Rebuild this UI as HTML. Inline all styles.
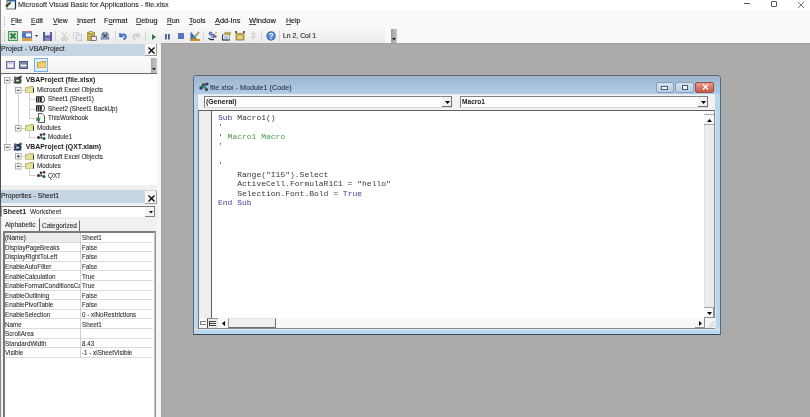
<!DOCTYPE html>
<html><head><meta charset="utf-8">
<style>
*{margin:0;padding:0;box-sizing:border-box}
html{width:810px;height:417px;overflow:hidden;background:#f9f9f9}
body{will-change:transform;width:810px;height:417px;overflow:hidden;background:#f9f9f9;font-family:"Liberation Sans",sans-serif;color:#000;position:relative}
.a{position:absolute}
.t{position:absolute;white-space:nowrap;line-height:1;transform-origin:0 0}
.t u{text-decoration:underline;text-underline-offset:0.6px;text-decoration-thickness:0.7px;text-decoration-color:#555}
svg{position:absolute;overflow:visible}
.code{font-family:"Liberation Mono",monospace;font-size:8px;position:absolute;white-space:pre;line-height:9.45px;color:#383838}
.kw{color:#40409a}
.cm{color:#509a50}
.ap{color:#3a5a3a}
</style></head><body>
<div class="a" style="left:0px;top:0px;width:810px;height:10px;background:#fff"></div>
<div class="a" style="left:0px;top:0px;width:1px;height:417px;background:#8a8a8a"></div>
<svg style="left:5px;top:0px" width="11" height="10" viewBox="0 0 11 10"><rect x="2" y="0.5" width="8.5" height="8.5" fill="#f0f4f8" stroke="#6a7080" stroke-width="1"/><path d="M2 0.5H10.5V9" stroke="#1a3050" stroke-width="1.2" fill="none"/><rect x="2" y="0" width="8.5" height="1.5" fill="#3a6a9a"/><path d="M1 6.5L5.5 2.5" stroke="#2a3a18" stroke-width="2.2"/><path d="M3.5 5L6.5 2.2" stroke="#6a8a40" stroke-width="0.8"/></svg>
<div class="t" style="left:17.71px;top:0.85px;font-size:7.5px;color:#2a2a2a;transform:scaleX(0.957);-webkit-text-stroke:0.1px #2a2a2a">Microsoft Visual Basic for Applications - file.xlsx</div>
<div class="a" style="left:744px;top:3px;width:6px;height:1px;background:#555"></div>
<div class="a" style="left:771px;top:0.5px;width:6px;height:6px;border:1px solid #555;border-top-width:1.5px;border-radius:1px"></div>
<svg style="left:798px;top:1.5px" width="6" height="6" viewBox="0 0 6 6"><path d="M0 0L6 6M6 0L0 6" stroke="#555" stroke-width="0.8"/></svg>
<div class="a" style="left:4px;top:16px;width:1px;height:1px;background:#b8b8b8"></div>
<div class="a" style="left:4px;top:18px;width:1px;height:1px;background:#b8b8b8"></div>
<div class="a" style="left:4px;top:20px;width:1px;height:1px;background:#b8b8b8"></div>
<div class="a" style="left:4px;top:22px;width:1px;height:1px;background:#b8b8b8"></div>
<div class="a" style="left:4px;top:24px;width:1px;height:1px;background:#b8b8b8"></div>
<div class="a" style="left:4px;top:26px;width:1px;height:1px;background:#b8b8b8"></div>
<div class="t" style="left:11.33px;top:17.38px;font-size:7.7px;color:#141414;transform:scaleX(0.890);-webkit-text-stroke:0.12px #141414"><u>F</u>ile</div>
<div class="t" style="left:31.42px;top:17.38px;font-size:7.7px;color:#141414;transform:scaleX(0.901);-webkit-text-stroke:0.12px #141414"><u>E</u>dit</div>
<div class="t" style="left:52.73px;top:17.38px;font-size:7.7px;color:#141414;transform:scaleX(0.891);-webkit-text-stroke:0.12px #141414"><u>V</u>iew</div>
<div class="t" style="left:76.70px;top:17.38px;font-size:7.7px;color:#141414;transform:scaleX(0.966);-webkit-text-stroke:0.12px #141414"><u>I</u>nsert</div>
<div class="t" style="left:103.70px;top:17.38px;font-size:7.7px;color:#141414;transform:scaleX(0.968);-webkit-text-stroke:0.12px #141414">F<u>o</u>rmat</div>
<div class="t" style="left:135.71px;top:17.38px;font-size:7.7px;color:#141414;transform:scaleX(0.951);-webkit-text-stroke:0.12px #141414"><u>D</u>ebug</div>
<div class="t" style="left:166.73px;top:17.38px;font-size:7.7px;color:#141414;transform:scaleX(0.888);-webkit-text-stroke:0.12px #141414"><u>R</u>un</div>
<div class="t" style="left:188.72px;top:17.38px;font-size:7.7px;color:#141414;transform:scaleX(0.922);-webkit-text-stroke:0.12px #141414"><u>T</u>ools</div>
<div class="t" style="left:214.71px;top:17.38px;font-size:7.7px;color:#141414;transform:scaleX(0.957);-webkit-text-stroke:0.12px #141414"><u>A</u>dd-Ins</div>
<div class="t" style="left:249.40px;top:17.38px;font-size:7.7px;color:#141414;transform:scaleX(0.982);-webkit-text-stroke:0.12px #141414"><u>W</u>indow</div>
<div class="t" style="left:285.72px;top:17.38px;font-size:7.7px;color:#141414;transform:scaleX(0.920);-webkit-text-stroke:0.12px #141414"><u>H</u>elp</div>
<div class="a" style="left:1px;top:28px;width:384px;height:16px;background:linear-gradient(#f7f7f7,#ebebeb)"></div>
<div class="a" style="left:385px;top:28px;width:6px;height:16px;background:#f9f9f9"></div>
<div class="a" style="left:391px;top:29px;width:6px;height:14px;background:linear-gradient(90deg,#9c9c9c,#c4c4c4)"></div>
<svg style="left:392px;top:38px" width="4" height="3" viewBox="0 0 4 3"><path d="M0 0H4L2 2.5Z" fill="#222"/></svg>
<div class="a" style="left:4px;top:30px;width:1px;height:1px;background:#b8b8b8"></div>
<div class="a" style="left:4px;top:32px;width:1px;height:1px;background:#b8b8b8"></div>
<div class="a" style="left:4px;top:34px;width:1px;height:1px;background:#b8b8b8"></div>
<div class="a" style="left:4px;top:36px;width:1px;height:1px;background:#b8b8b8"></div>
<div class="a" style="left:4px;top:38px;width:1px;height:1px;background:#b8b8b8"></div>
<div class="a" style="left:4px;top:40px;width:1px;height:1px;background:#b8b8b8"></div>
<svg style="left:8px;top:31px" width="10" height="10" viewBox="0 0 10 10"><rect x="0.5" y="0.5" width="9" height="9" fill="#c8e4c8" stroke="#4a9a5a"/><path d="M2.5 2.5L7.5 7.5M7.5 2.5L2.5 7.5" stroke="#2a7a3a" stroke-width="1.8"/></svg>
<svg style="left:22px;top:31px" width="10" height="10" viewBox="0 0 10 10"><rect x="0" y="0" width="10" height="10" fill="#4a7ac8"/><rect x="0" y="0" width="10" height="1.5" fill="#b07aa0"/><rect x="0" y="7" width="10" height="3" fill="#d8a040"/><rect x="4" y="2.5" width="5" height="3" fill="#fff"/></svg>
<svg style="left:35px;top:35px" width="3" height="2" viewBox="0 0 3 2"><path d="M0 0H3L1.5 2Z" fill="#333"/></svg>
<svg style="left:43px;top:31.5px" width="9" height="9" viewBox="0 0 9 9"><rect x="0" y="0" width="9" height="9" fill="#5a5aa0"/><rect x="2" y="0" width="5" height="3.5" fill="#e8e8f4"/><rect x="2" y="5.5" width="5" height="3.5" fill="#8a8ac0"/></svg>
<div class="a" style="left:55px;top:31px;width:1px;height:10px;background:#d4d4d4"></div>
<svg style="left:61px;top:31.5px" width="7" height="9" viewBox="0 0 7 9"><path d="M1 0L5 6M6 0L2 6" stroke="#c8c8c8" stroke-width="1"/><circle cx="1.8" cy="7" r="1.5" fill="none" stroke="#c8c8c8"/><circle cx="5.2" cy="7" r="1.5" fill="none" stroke="#c8c8c8"/></svg>
<svg style="left:73px;top:31.5px" width="9" height="9" viewBox="0 0 9 9"><rect x="0.5" y="0.5" width="5" height="6" fill="#f4f4f4" stroke="#d4d4d4"/><rect x="3.5" y="2.5" width="5" height="6" fill="#e8e8f0" stroke="#ccccd4"/></svg>
<svg style="left:87px;top:31px" width="10" height="10" viewBox="0 0 10 10"><rect x="0.5" y="1.5" width="7" height="8" fill="#c8b048" stroke="#a08a30" stroke-width="0.8"/><rect x="2.5" y="0.5" width="3" height="2" fill="#fff4c0" stroke="#807020" stroke-width="0.6"/><rect x="4.3" y="5.3" width="5" height="4.2" fill="#f4f0f4" stroke="#505050" stroke-width="0.7"/></svg>
<svg style="left:100px;top:31px" width="10" height="10" viewBox="0 0 10 10"><path d="M1.5 3L3.5 0.8H4.5L4.8 8.5H0.5Z M8.5 3L6.5 0.8H5.5L5.2 8.5H9.5Z" fill="#6a7a9a"/><path d="M2.2 4V7.5M7.8 4V7.5" stroke="#c8d4e8" stroke-width="0.9"/><rect x="4" y="3.5" width="2" height="2.5" fill="#3a4a6a"/></svg>
<div class="a" style="left:115px;top:31px;width:1px;height:10px;background:#d4d4d4"></div>
<svg style="left:119px;top:32px" width="8" height="8" viewBox="0 0 8 8"><path d="M1 1V4.5H4.5" stroke="#3a6ac0" stroke-width="1.6" fill="none"/><path d="M1.5 4Q4 1 6.5 3.5Q7.5 6 4.5 7.5" stroke="#3a6ac0" stroke-width="1.8" fill="none"/></svg>
<svg style="left:132px;top:32px" width="8" height="8" viewBox="0 0 8 8"><path d="M7 1V4.5H3.5" stroke="#cccccc" stroke-width="1.5" fill="none"/><path d="M6.5 4Q4 1 1.5 3.5Q0.5 6 3.5 7.5" stroke="#cccccc" stroke-width="1.6" fill="none"/></svg>
<div class="a" style="left:145px;top:31px;width:1px;height:10px;background:#d4d4d4"></div>
<svg style="left:152px;top:33.5px" width="4" height="6" viewBox="0 0 4 6"><path d="M0 0L4 3L0 6Z" fill="#2a7a3a"/></svg>
<svg style="left:165px;top:33.5px" width="5" height="5.5" viewBox="0 0 5 5.5"><rect x="0" y="0" width="1.8" height="5.5" fill="#4a5a98"/><rect x="3" y="0" width="1.8" height="5.5" fill="#4a5a98"/></svg>
<svg style="left:178px;top:33px" width="6" height="6" viewBox="0 0 6 6"><rect x="0" y="0" width="6" height="6" fill="#5a72c0" rx="0.5"/></svg>
<svg style="left:190px;top:31px" width="10" height="10" viewBox="0 0 10 10"><path d="M0.5 0.5V8L7 8Z" fill="#3a6ac0"/><path d="M3 8L9 1" stroke="#8a9a50" stroke-width="1.6"/><rect x="0" y="8" width="10" height="2" fill="#d88a20"/></svg>
<div class="a" style="left:203px;top:31px;width:1px;height:10px;background:#d4d4d4"></div>
<svg style="left:207.5px;top:31px" width="10" height="10" viewBox="0 0 10 10"><circle cx="2.5" cy="2.5" r="2" fill="#6a82b8"/><circle cx="5" cy="5" r="2.3" fill="#5a7ab8"/><circle cx="3.5" cy="5.5" r="1.3" fill="#a8c0e0"/><path d="M0.5 7Q2 9.3 6 8.3" stroke="#1a2a4a" stroke-width="1.3" fill="none"/><circle cx="8" cy="1.8" r="1.3" fill="#e0c898"/><circle cx="7.7" cy="5.5" r="0.9" fill="#7a3a3a"/></svg>
<svg style="left:221.5px;top:31px" width="10" height="10" viewBox="0 0 10 10"><rect x="0.5" y="3.5" width="7" height="5.5" fill="#dde4ee" stroke="#8a96a8" stroke-width="0.8"/><path d="M0.2 9H7.6M0.5 4V9" stroke="#2a3450" stroke-width="1"/><path d="M2 1.5Q5 0.3 9 1.2V3.8Q6 4.5 2 3.8Z" fill="#b8ac58"/><rect x="2.5" y="5.5" width="3" height="2" fill="#9aaccc"/></svg>
<svg style="left:235px;top:31px" width="10" height="10" viewBox="0 0 10 10"><rect x="1" y="2.5" width="8" height="6.5" fill="#c8b858" stroke="#8a7a30" stroke-width="0.8"/><circle cx="1" cy="1" r="1" fill="#333"/><circle cx="9" cy="1" r="1" fill="#333"/><rect x="3" y="5" width="4" height="2.5" fill="#e8dca0"/></svg>
<svg style="left:250px;top:32px" width="7" height="7" viewBox="0 0 7 7"><path d="M1 1L6 6M6 1L1 6M3.5 0V7" stroke="#d4d4d4" stroke-width="1.2"/></svg>
<div class="a" style="left:261px;top:31px;width:1px;height:10px;background:#d4d4d4"></div>
<svg style="left:265.5px;top:31px" width="10" height="10" viewBox="0 0 10 10"><circle cx="5" cy="5" r="4.7" fill="#3a6ab8"/><circle cx="5" cy="5" r="3.5" fill="#5a8ad0"/><path d="M3.5 3.8Q3.6 2.3 5 2.3Q6.5 2.3 6.5 3.8Q6.5 4.8 5 5.5V6.3" stroke="#fff" stroke-width="1.1" fill="none"/><circle cx="5" cy="7.8" r="0.7" fill="#fff"/></svg>
<div class="a" style="left:279px;top:31px;width:1px;height:10px;background:#d4d4d4"></div>
<div class="t" style="left:283.43px;top:32.15px;font-size:7.5px;color:#1e1e1e;transform:scaleX(0.914);-webkit-text-stroke:0.1px #1e1e1e">Ln 2, Col 1</div>
<div class="a" style="left:161px;top:44px;width:649px;height:373px;background:#ababab"></div>
<div class="a" style="left:161px;top:43px;width:649px;height:1px;background:#a2a2a2"></div>
<div class="a" style="left:157px;top:44px;width:4px;height:373px;background:#f6f6f6"></div>
<div class="a" style="left:161px;top:44px;width:1px;height:373px;background:#a4a4a4"></div>
<div class="a" style="left:1px;top:44px;width:156px;height:146px;background:#fff"></div>
<div class="a" style="left:1px;top:44px;width:156px;height:12px;background:#c6d5e4"></div>
<div class="t" style="left:1.22px;top:44.80px;font-size:7.8px;color:#202020;transform:scaleX(0.898);-webkit-text-stroke:0.1px #202020">Project - VBAProject</div>
<div class="a" style="left:145px;top:44px;width:12px;height:12px;background:#f8f8f8;border-right:1px solid #9a9a9a;border-bottom:1px solid #9a9a9a"></div>
<svg style="left:147.5px;top:46.5px" width="7" height="7" viewBox="0 0 7 7"><path d="M0.5 0.5L6.5 6.5M6.5 0.5L0.5 6.5" stroke="#000" stroke-width="1.3"/></svg>
<div class="a" style="left:1px;top:56px;width:156px;height:17px;background:linear-gradient(#fbfbfb,#f3f3f3)"></div>
<div class="a" style="left:151px;top:58px;width:6px;height:15px;background:linear-gradient(90deg,#a8a8a8,#c8c8c8)"></div>
<svg style="left:152px;top:68px" width="4" height="3" viewBox="0 0 4 3"><path d="M0 0H4L2 2.5Z" fill="#333"/></svg>
<div class="a" style="left:1px;top:73px;width:156px;height:1px;background:#6a6a6a"></div>
<svg style="left:6px;top:61px" width="9" height="8" viewBox="0 0 9 8"><rect x="0.5" y="0.5" width="8" height="7" fill="#c8c8e0" stroke="#6a6a98"/><rect x="2" y="3" width="5" height="3" fill="#f0f0f8"/></svg>
<svg style="left:19px;top:61px" width="9" height="8" viewBox="0 0 9 8"><rect x="0.5" y="0.5" width="8" height="7" fill="#7a8aa8" stroke="#505a78"/><rect x="1.5" y="3.5" width="6" height="2" fill="#e8ecf4"/></svg>
<div class="a" style="left:34px;top:58px;width:14px;height:14px;background:#e0ecf8;border:1px solid #7ab0e0"></div>
<svg style="left:36.5px;top:61px" width="9" height="7" viewBox="0 0 9 7"><path d="M0.5 1.5H3.5L4.5 0.5H8.5V6.5H0.5Z" fill="#e8c860" stroke="#b09030" stroke-width="0.8"/><rect x="1" y="2.5" width="7.5" height="4" fill="#f0d070"/></svg>
<div class="a" style="left:6px;top:83.0px;width:1px;height:60.6px;background:#d2d2d2"></div>
<div class="a" style="left:18px;top:92.5px;width:1px;height:32.1px;background:#d2d2d2"></div>
<div class="a" style="left:18px;top:159.2px;width:1px;height:3.5px;background:#d2d2d2"></div>
<div class="a" style="left:29px;top:93.0px;width:1px;height:25.1px;background:#d2d2d2"></div>
<div class="a" style="left:29px;top:131.1px;width:1px;height:6.0px;background:#d2d2d2"></div>
<div class="a" style="left:29px;top:169.2px;width:1px;height:6.0px;background:#d2d2d2"></div>
<div class="a" style="left:10px;top:80.0px;width:4px;height:1px;background:#d2d2d2"></div>
<div class="a" style="left:10px;top:146.6px;width:4px;height:1px;background:#d2d2d2"></div>
<div class="a" style="left:21px;top:89.5px;width:4px;height:1px;background:#d2d2d2"></div>
<div class="a" style="left:21px;top:127.6px;width:4px;height:1px;background:#d2d2d2"></div>
<div class="a" style="left:21px;top:156.2px;width:4px;height:1px;background:#d2d2d2"></div>
<div class="a" style="left:21px;top:165.7px;width:4px;height:1px;background:#d2d2d2"></div>
<div class="a" style="left:29px;top:99.0px;width:7px;height:1px;background:#d2d2d2"></div>
<div class="a" style="left:29px;top:108.6px;width:7px;height:1px;background:#d2d2d2"></div>
<div class="a" style="left:29px;top:118.1px;width:7px;height:1px;background:#d2d2d2"></div>
<div class="a" style="left:29px;top:137.1px;width:7px;height:1px;background:#d2d2d2"></div>
<div class="a" style="left:29px;top:175.2px;width:7px;height:1px;background:#d2d2d2"></div>
<svg style="left:3.5px;top:77.2px" width="7" height="7" viewBox="0 0 7 7"><rect x="0.5" y="0.5" width="5.5" height="5.5" fill="#fff" stroke="#ababab"/><path d="M1.8 3.25H4.7" stroke="#333" stroke-width="1"/></svg>
<svg style="left:13px;top:75.3px" width="10" height="9" viewBox="0 0 10 9"><path d="M1.5 1.2L4 2L6.5 1.5L8.3 0.2L8.8 2.2L7.8 3.8L8.8 5.2L8 7.2L8.8 8.3L5 8.8L1.5 8.5L0.2 7.6L1.6 6.2L1 4Z" fill="#3a4a3a"/><rect x="3" y="4.8" width="3.2" height="1.6" fill="#c8e4d8"/><rect x="2.2" y="2.6" width="1.5" height="1.3" fill="#7a9a8a"/></svg>
<div class="t" style="left:25.72px;top:77.16px;font-size:6.9px;color:#1a1a1a;font-weight:bold;">VBAProject (file.xlsx)</div>
<svg style="left:15px;top:86.7px" width="7" height="7" viewBox="0 0 7 7"><rect x="0.5" y="0.5" width="5.5" height="5.5" fill="#fff" stroke="#ababab"/><path d="M1.8 3.25H4.7" stroke="#333" stroke-width="1"/></svg>
<svg style="left:25px;top:86.0px" width="9" height="7" viewBox="0 0 9 7"><path d="M0.5 1.5H3.5L4.5 0.5H8.5V6.5H0.5Z" fill="#d8d890" stroke="#a8a860" stroke-width="0.8"/><rect x="1" y="2.5" width="7.5" height="4" fill="#e4e49a"/><path d="M8.5 2V6.5" stroke="#333" stroke-width="1"/></svg>
<div class="t" style="left:36.55px;top:85.89px;font-size:7.0px;color:#262626;transform:scaleX(0.900);-webkit-text-stroke:0.08px #262626">Microsoft Excel Objects</div>
<svg style="left:36px;top:95.5px" width="9" height="7" viewBox="0 0 9 7"><rect x="0" y="0.3" width="5.8" height="6.2" fill="#1e1e1e"/><path d="M1.6 1.2V6.5M3.6 1.2V6.5" stroke="#d8d8d8" stroke-width="0.7"/><path d="M5.8 0.3H7Q8.6 0.8 8.4 3.4Q8.6 6 7 6.5H5.8" stroke="#333" fill="none" stroke-width="1"/></svg>
<div class="t" style="left:47.75px;top:95.41px;font-size:7.0px;color:#262626;transform:scaleX(0.900);-webkit-text-stroke:0.08px #262626">Sheet1 (Sheet1)</div>
<svg style="left:36px;top:105.1px" width="9" height="7" viewBox="0 0 9 7"><rect x="0" y="0.3" width="5.8" height="6.2" fill="#1e1e1e"/><path d="M1.6 1.2V6.5M3.6 1.2V6.5" stroke="#d8d8d8" stroke-width="0.7"/><path d="M5.8 0.3H7Q8.6 0.8 8.4 3.4Q8.6 6 7 6.5H5.8" stroke="#333" fill="none" stroke-width="1"/></svg>
<div class="t" style="left:47.75px;top:104.93px;font-size:7.0px;color:#262626;transform:scaleX(0.900);-webkit-text-stroke:0.08px #262626">Sheet2 (Sheet1 BackUp)</div>
<svg style="left:36px;top:113.3px" width="9" height="10" viewBox="0 0 9 10"><path d="M2.5 0.5H6L8.5 3V9.5H2.5Z" fill="#fff" stroke="#444" stroke-width="0.9"/><circle cx="2.2" cy="6.3" r="2" fill="#4a9a58"/><path d="M0.5 4.5L4 8M4 4.5L0.5 8" stroke="#2a7a3a" stroke-width="0.9"/></svg>
<div class="t" style="left:47.75px;top:114.45px;font-size:7.0px;color:#262626;transform:scaleX(0.900);-webkit-text-stroke:0.08px #262626">ThisWorkbook</div>
<svg style="left:15px;top:124.8px" width="7" height="7" viewBox="0 0 7 7"><rect x="0.5" y="0.5" width="5.5" height="5.5" fill="#fff" stroke="#ababab"/><path d="M1.8 3.25H4.7" stroke="#333" stroke-width="1"/></svg>
<svg style="left:25px;top:124.1px" width="9" height="7" viewBox="0 0 9 7"><path d="M0.5 1.5H3.5L4.5 0.5H8.5V6.5H0.5Z" fill="#d8d890" stroke="#a8a860" stroke-width="0.8"/><rect x="1" y="2.5" width="7.5" height="4" fill="#e4e49a"/><path d="M8.5 2V6.5" stroke="#333" stroke-width="1"/></svg>
<div class="t" style="left:36.55px;top:123.97px;font-size:7.0px;color:#262626;transform:scaleX(0.900);-webkit-text-stroke:0.08px #262626">Modules</div>
<svg style="left:36px;top:132.1px" width="10" height="9" viewBox="0 0 10 9"><circle cx="2.5" cy="5.5" r="1.5" fill="#4a1a4a"/><circle cx="5" cy="2.8" r="1.3" fill="#2a3a2a"/><circle cx="8" cy="2.3" r="1.4" fill="#6a2a5a"/><circle cx="8" cy="6.5" r="1.5" fill="#1a5a4a"/><circle cx="5.3" cy="5.5" r="1.2" fill="#3a6a4a"/></svg>
<div class="t" style="left:47.75px;top:133.49px;font-size:7.0px;color:#262626;transform:scaleX(0.900);-webkit-text-stroke:0.08px #262626">Module1</div>
<svg style="left:3.5px;top:143.8px" width="7" height="7" viewBox="0 0 7 7"><rect x="0.5" y="0.5" width="5.5" height="5.5" fill="#fff" stroke="#ababab"/><path d="M1.8 3.25H4.7" stroke="#333" stroke-width="1"/></svg>
<svg style="left:13px;top:141.9px" width="10" height="9" viewBox="0 0 10 9"><path d="M1.5 1.2L4 2L6.5 1.5L8.3 0.2L8.8 2.2L7.8 3.8L8.8 5.2L8 7.2L8.8 8.3L5 8.8L1.5 8.5L0.2 7.6L1.6 6.2L1 4Z" fill="#2a3a5a"/><rect x="3" y="4.8" width="3.2" height="1.6" fill="#c8e4d8"/><rect x="2.2" y="2.6" width="1.5" height="1.3" fill="#7a9a8a"/></svg>
<div class="t" style="left:25.72px;top:143.80px;font-size:6.9px;color:#1a1a1a;font-weight:bold;">VBAProject (QXT.xlam)</div>
<svg style="left:15px;top:153.4px" width="7" height="7" viewBox="0 0 7 7"><rect x="0.5" y="0.5" width="5.5" height="5.5" fill="#fff" stroke="#ababab"/><path d="M1.8 3.25H4.7 M3.25 1.8V4.7" stroke="#333" stroke-width="1"/></svg>
<svg style="left:25px;top:152.7px" width="9" height="7" viewBox="0 0 9 7"><path d="M0.5 1.5H3.5L4.5 0.5H8.5V6.5H0.5Z" fill="#d8d890" stroke="#a8a860" stroke-width="0.8"/><rect x="1" y="2.5" width="7.5" height="4" fill="#e4e49a"/><path d="M8.5 2V6.5" stroke="#333" stroke-width="1"/></svg>
<div class="t" style="left:36.55px;top:152.53px;font-size:7.0px;color:#262626;transform:scaleX(0.900);-webkit-text-stroke:0.08px #262626">Microsoft Excel Objects</div>
<svg style="left:15px;top:162.9px" width="7" height="7" viewBox="0 0 7 7"><rect x="0.5" y="0.5" width="5.5" height="5.5" fill="#fff" stroke="#ababab"/><path d="M1.8 3.25H4.7" stroke="#333" stroke-width="1"/></svg>
<svg style="left:25px;top:162.2px" width="9" height="7" viewBox="0 0 9 7"><path d="M0.5 1.5H3.5L4.5 0.5H8.5V6.5H0.5Z" fill="#d8d890" stroke="#a8a860" stroke-width="0.8"/><rect x="1" y="2.5" width="7.5" height="4" fill="#e4e49a"/><path d="M8.5 2V6.5" stroke="#333" stroke-width="1"/></svg>
<div class="t" style="left:36.55px;top:162.05px;font-size:7.0px;color:#262626;transform:scaleX(0.900);-webkit-text-stroke:0.08px #262626">Modules</div>
<svg style="left:36px;top:170.2px" width="10" height="9" viewBox="0 0 10 9"><circle cx="2.5" cy="5.5" r="1.5" fill="#4a1a4a"/><circle cx="5" cy="2.8" r="1.3" fill="#2a3a2a"/><circle cx="8" cy="2.3" r="1.4" fill="#6a2a5a"/><circle cx="8" cy="6.5" r="1.5" fill="#1a5a4a"/><circle cx="5.3" cy="5.5" r="1.2" fill="#3a6a4a"/></svg>
<div class="t" style="left:47.75px;top:171.57px;font-size:7.0px;color:#262626;transform:scaleX(0.900);-webkit-text-stroke:0.08px #262626">QXT</div>
<div class="a" style="left:1px;top:185px;width:156px;height:5px;background:#f0f0f0"></div>
<div class="a" style="left:1px;top:190px;width:156px;height:227px;background:#f0f0f0"></div>
<div class="a" style="left:0px;top:44px;width:1px;height:172px;background:#505050"></div>
<div class="a" style="left:1px;top:190px;width:156px;height:13px;background:#c6d5e4"></div>
<div class="t" style="left:1.33px;top:191.60px;font-size:7.8px;color:#202020;transform:scaleX(0.864);-webkit-text-stroke:0.1px #202020">Properties - Sheet1</div>
<div class="a" style="left:145px;top:190.5px;width:12px;height:13px;background:#f8f8f8;border-right:1px solid #9a9a9a;border-bottom:1px solid #9a9a9a"></div>
<svg style="left:147.5px;top:194.5px" width="7" height="6.5" viewBox="0 0 7 6.5"><path d="M0.5 0.5L6.5 6.5M6.5 0.5L0.5 6.5" stroke="#000" stroke-width="1.3"/></svg>
<div class="a" style="left:1px;top:206px;width:154px;height:11px;background:#fff;border-top:1px solid #7a7a7a;border-left:1px solid #9a9a9a"></div>
<div class="t" style="left:2.92px;top:207.81px;font-size:7.2px;color:#1a1a1a;font-weight:bold;transform:scaleX(0.981);">Sheet1</div>
<div class="t" style="left:29.74px;top:207.64px;font-size:7.4px;color:#303030;transform:scaleX(0.886);-webkit-text-stroke:0.08px #303030">Worksheet</div>
<div class="a" style="left:145px;top:207px;width:10px;height:10px;background:#f4f4f4;border-right:1px solid #808080;border-bottom:1px solid #808080"></div>
<svg style="left:148.5px;top:210.5px" width="4" height="3" viewBox="0 0 4 3"><path d="M0 0H4L2 2.5Z" fill="#000"/></svg>
<div class="a" style="left:3px;top:218px;width:37px;height:14px;background:#f4f4f4;border-top:1px solid #fff;border-left:1px solid #fff;border-right:1px solid #606060"></div>
<div class="t" style="left:5.04px;top:220.92px;font-size:7.3px;color:#262626;transform:scaleX(0.895);-webkit-text-stroke:0.08px #262626">Alphabetic</div>
<div class="a" style="left:40px;top:220px;width:40px;height:11px;background:#f0f0f0;border-top:1px solid #fff;border-right:1px solid #707070"></div>
<div class="t" style="left:41.94px;top:221.52px;font-size:7.3px;color:#262626;transform:scaleX(0.885);-webkit-text-stroke:0.08px #262626">Categorized</div>
<div class="a" style="left:3px;top:231px;width:152px;height:186px;background:#fff;border-top:2px solid #7a7a7a;border-left:2px solid #7a7a7a;border-right:1px solid #c0c0c0"></div>
<div class="a" style="left:155px;top:231px;width:1px;height:186px;background:#9a9a9a"></div>
<div class="a" style="left:5px;top:233px;width:75px;height:9px;background:#ececec"></div>
<div class="a" style="left:5px;top:241.6px;width:148px;height:1px;background:#dcdcdc"></div>
<div class="a" style="left:5px;top:233.0px;width:75px;height:9px;overflow:hidden">
<div class="t" style="left:0.25px;top:1.21px;font-size:7.2px;color:#2a2a2a;transform:scaleX(0.870);-webkit-text-stroke:0.08px #2a2a2a">(Name)</div>
</div>
<div class="t" style="left:81.75px;top:234.21px;font-size:7.2px;color:#2a2a2a;transform:scaleX(0.870);-webkit-text-stroke:0.08px #2a2a2a">Sheet1</div>
<div class="a" style="left:5px;top:251.2px;width:148px;height:1px;background:#dcdcdc"></div>
<div class="a" style="left:5px;top:242.6px;width:75px;height:9px;overflow:hidden">
<div class="t" style="left:0.25px;top:1.21px;font-size:7.2px;color:#2a2a2a;transform:scaleX(0.870);-webkit-text-stroke:0.08px #2a2a2a">DisplayPageBreaks</div>
</div>
<div class="t" style="left:81.75px;top:243.81px;font-size:7.2px;color:#2a2a2a;transform:scaleX(0.870);-webkit-text-stroke:0.08px #2a2a2a">False</div>
<div class="a" style="left:5px;top:260.8px;width:148px;height:1px;background:#dcdcdc"></div>
<div class="a" style="left:5px;top:252.2px;width:75px;height:9px;overflow:hidden">
<div class="t" style="left:0.25px;top:1.21px;font-size:7.2px;color:#2a2a2a;transform:scaleX(0.870);-webkit-text-stroke:0.08px #2a2a2a">DisplayRightToLeft</div>
</div>
<div class="t" style="left:81.75px;top:253.41px;font-size:7.2px;color:#2a2a2a;transform:scaleX(0.870);-webkit-text-stroke:0.08px #2a2a2a">False</div>
<div class="a" style="left:5px;top:270.4px;width:148px;height:1px;background:#dcdcdc"></div>
<div class="a" style="left:5px;top:261.8px;width:75px;height:9px;overflow:hidden">
<div class="t" style="left:0.25px;top:1.21px;font-size:7.2px;color:#2a2a2a;transform:scaleX(0.870);-webkit-text-stroke:0.08px #2a2a2a">EnableAutoFilter</div>
</div>
<div class="t" style="left:81.75px;top:263.01px;font-size:7.2px;color:#2a2a2a;transform:scaleX(0.870);-webkit-text-stroke:0.08px #2a2a2a">False</div>
<div class="a" style="left:5px;top:280.0px;width:148px;height:1px;background:#dcdcdc"></div>
<div class="a" style="left:5px;top:271.4px;width:75px;height:9px;overflow:hidden">
<div class="t" style="left:0.25px;top:1.21px;font-size:7.2px;color:#2a2a2a;transform:scaleX(0.870);-webkit-text-stroke:0.08px #2a2a2a">EnableCalculation</div>
</div>
<div class="t" style="left:81.75px;top:272.61px;font-size:7.2px;color:#2a2a2a;transform:scaleX(0.870);-webkit-text-stroke:0.08px #2a2a2a">True</div>
<div class="a" style="left:5px;top:289.6px;width:148px;height:1px;background:#dcdcdc"></div>
<div class="a" style="left:5px;top:281.0px;width:75px;height:9px;overflow:hidden">
<div class="t" style="left:0.25px;top:1.21px;font-size:7.2px;color:#2a2a2a;transform:scaleX(0.870);-webkit-text-stroke:0.08px #2a2a2a">EnableFormatConditionsCalculation</div>
</div>
<div class="t" style="left:81.75px;top:282.21px;font-size:7.2px;color:#2a2a2a;transform:scaleX(0.870);-webkit-text-stroke:0.08px #2a2a2a">True</div>
<div class="a" style="left:5px;top:299.2px;width:148px;height:1px;background:#dcdcdc"></div>
<div class="a" style="left:5px;top:290.6px;width:75px;height:9px;overflow:hidden">
<div class="t" style="left:0.25px;top:1.21px;font-size:7.2px;color:#2a2a2a;transform:scaleX(0.870);-webkit-text-stroke:0.08px #2a2a2a">EnableOutlining</div>
</div>
<div class="t" style="left:81.75px;top:291.81px;font-size:7.2px;color:#2a2a2a;transform:scaleX(0.870);-webkit-text-stroke:0.08px #2a2a2a">False</div>
<div class="a" style="left:5px;top:308.8px;width:148px;height:1px;background:#dcdcdc"></div>
<div class="a" style="left:5px;top:300.2px;width:75px;height:9px;overflow:hidden">
<div class="t" style="left:0.25px;top:1.21px;font-size:7.2px;color:#2a2a2a;transform:scaleX(0.870);-webkit-text-stroke:0.08px #2a2a2a">EnablePivotTable</div>
</div>
<div class="t" style="left:81.75px;top:301.41px;font-size:7.2px;color:#2a2a2a;transform:scaleX(0.870);-webkit-text-stroke:0.08px #2a2a2a">False</div>
<div class="a" style="left:5px;top:318.4px;width:148px;height:1px;background:#dcdcdc"></div>
<div class="a" style="left:5px;top:309.8px;width:75px;height:9px;overflow:hidden">
<div class="t" style="left:0.25px;top:1.21px;font-size:7.2px;color:#2a2a2a;transform:scaleX(0.870);-webkit-text-stroke:0.08px #2a2a2a">EnableSelection</div>
</div>
<div class="t" style="left:81.75px;top:311.01px;font-size:7.2px;color:#2a2a2a;transform:scaleX(0.870);-webkit-text-stroke:0.08px #2a2a2a">0 - xlNoRestrictions</div>
<div class="a" style="left:5px;top:328.0px;width:148px;height:1px;background:#dcdcdc"></div>
<div class="a" style="left:5px;top:319.4px;width:75px;height:9px;overflow:hidden">
<div class="t" style="left:0.25px;top:1.21px;font-size:7.2px;color:#2a2a2a;transform:scaleX(0.870);-webkit-text-stroke:0.08px #2a2a2a">Name</div>
</div>
<div class="t" style="left:81.75px;top:320.61px;font-size:7.2px;color:#2a2a2a;transform:scaleX(0.870);-webkit-text-stroke:0.08px #2a2a2a">Sheet1</div>
<div class="a" style="left:5px;top:337.6px;width:148px;height:1px;background:#dcdcdc"></div>
<div class="a" style="left:5px;top:329.0px;width:75px;height:9px;overflow:hidden">
<div class="t" style="left:0.25px;top:1.21px;font-size:7.2px;color:#2a2a2a;transform:scaleX(0.870);-webkit-text-stroke:0.08px #2a2a2a">ScrollArea</div>
</div>
<div class="a" style="left:5px;top:347.2px;width:148px;height:1px;background:#dcdcdc"></div>
<div class="a" style="left:5px;top:338.6px;width:75px;height:9px;overflow:hidden">
<div class="t" style="left:0.25px;top:1.21px;font-size:7.2px;color:#2a2a2a;transform:scaleX(0.870);-webkit-text-stroke:0.08px #2a2a2a">StandardWidth</div>
</div>
<div class="t" style="left:81.75px;top:339.81px;font-size:7.2px;color:#2a2a2a;transform:scaleX(0.870);-webkit-text-stroke:0.08px #2a2a2a">8.43</div>
<div class="a" style="left:5px;top:356.8px;width:148px;height:1px;background:#dcdcdc"></div>
<div class="a" style="left:5px;top:348.2px;width:75px;height:9px;overflow:hidden">
<div class="t" style="left:0.25px;top:1.21px;font-size:7.2px;color:#2a2a2a;transform:scaleX(0.870);-webkit-text-stroke:0.08px #2a2a2a">Visible</div>
</div>
<div class="t" style="left:81.75px;top:349.41px;font-size:7.2px;color:#2a2a2a;transform:scaleX(0.870);-webkit-text-stroke:0.08px #2a2a2a">-1 - xlSheetVisible</div>
<div class="a" style="left:80px;top:233px;width:1px;height:124.8px;background:#d0d0d0"></div>
<div class="a" style="left:193px;top:75px;width:528px;height:260px;background:#b8d8f0;border:1px solid #5a6878;border-bottom-color:#3a4858;border-radius:4px 4px 0 0"></div>
<div class="a" style="left:194px;top:94px;width:4px;height:240px;background:linear-gradient(90deg,#c8dcee,#b8d0e4)"></div>
<div class="a" style="left:194px;top:76px;width:526px;height:18px;background:linear-gradient(#9eb6cd,#b0cce6);border-radius:3px 3px 0 0"></div>
<svg style="left:198px;top:81px" width="12" height="11" viewBox="0 0 12 11"><path d="M4 3.5L9 8.5M3 7L8 3" stroke="#2a7a5a" stroke-width="2.2"/><circle cx="3" cy="7" r="1.7" fill="#4a2a7a"/><circle cx="9" cy="3" r="1.6" fill="#6a1a7a"/><circle cx="5.5" cy="3.5" r="1.3" fill="#2a4a3a"/><circle cx="8.5" cy="8.8" r="1.4" fill="#2a3a2a"/><circle cx="6.5" cy="6" r="1.5" fill="#3a9a7a"/></svg>
<div class="t" style="left:210.31px;top:83.77px;font-size:7.6px;color:#2a3444;transform:scaleX(0.947);-webkit-text-stroke:0.1px #2a3444">file.xlsx - Module1 (Code)</div>
<div class="a" style="left:656px;top:82px;width:18px;height:11px;background:linear-gradient(#d4e2f0,#b4cce4);border:1px solid #8aa0bc;border-radius:2px"></div>
<div class="a" style="left:661px;top:86px;width:7px;height:3.5px;background:#fff;border:1px solid #505868"></div>
<div class="a" style="left:675px;top:82px;width:19px;height:11px;background:linear-gradient(#d4e2f0,#b4cce4);border:1px solid #8aa0bc;border-radius:2px"></div>
<div class="a" style="left:681.5px;top:84.5px;width:6px;height:5px;background:#f4f8fc;border:1px solid #505868;border-top-width:1.5px"></div>
<div class="a" style="left:695px;top:81.5px;width:19px;height:11.5px;background:linear-gradient(#e49a8a,#c85a44);border:1px solid #a05040;border-radius:2px"></div>
<svg style="left:701.5px;top:84px" width="7" height="6" viewBox="0 0 7 6"><path d="M1 0.5L6 5.5M6 0.5L1 5.5" stroke="#fff" stroke-width="1.3"/></svg>
<div class="a" style="left:198px;top:94px;width:517px;height:16px;background:#f2f2f2;border-top:1px solid #e4ecf4"></div>
<div class="a" style="left:204px;top:96px;width:248px;height:12px;background:#fff;border-top:1px solid #808080;border-left:1px solid #808080;border-bottom:1px solid #d8d8d8"></div>
<div class="t" style="left:205.82px;top:97.92px;font-size:7.3px;color:#1a1a1a;font-weight:bold;transform:scaleX(0.953);">(General)</div>
<div class="a" style="left:442px;top:97px;width:10px;height:10px;background:#f0f0f0;border-right:1px solid #707070;border-bottom:1px solid #707070"></div>
<svg style="left:445px;top:100.5px" width="5" height="3" viewBox="0 0 5 3"><path d="M0 0H5L2.5 3Z" fill="#000"/></svg>
<div class="a" style="left:460px;top:96px;width:248px;height:12px;background:#fff;border-top:1px solid #808080;border-left:1px solid #808080;border-bottom:1px solid #d8d8d8"></div>
<div class="t" style="left:461.84px;top:97.92px;font-size:7.3px;color:#1a1a1a;font-weight:bold;transform:scaleX(0.901);">Macro1</div>
<div class="a" style="left:698px;top:97px;width:10px;height:10px;background:#f0f0f0;border-right:1px solid #707070;border-bottom:1px solid #707070"></div>
<svg style="left:701px;top:100.5px" width="5" height="3" viewBox="0 0 5 3"><path d="M0 0H5L2.5 3Z" fill="#000"/></svg>
<div class="a" style="left:194px;top:329px;width:526px;height:1px;background:#d8e8f4"></div>
<div class="a" style="left:715px;top:110px;width:1px;height:219px;background:#d8e8f4"></div>
<div class="a" style="left:198px;top:110px;width:517px;height:219px;background:#fff;border-top:1px solid #606060;border-left:1px solid #707880;border-right:1px solid #8a8a8a;border-bottom:1px solid #8a8a8a"></div>
<div class="a" style="left:199px;top:111px;width:12px;height:207px;background:#eeeef0"></div>
<div class="a" style="left:211px;top:111px;width:1px;height:207px;background:#606060"></div>
<div class="a" style="left:704px;top:111px;width:10px;height:207px;background:#ececec;border-left:1px solid #e0e0e0"></div>
<div class="a" style="left:704px;top:111px;width:10px;height:13px;background:#f8f8f8"></div>
<div class="a" style="left:704px;top:114px;width:10px;height:1px;background:#a8a8a8"></div>
<div class="a" style="left:704px;top:124px;width:10px;height:1px;background:#a8a8a8"></div>
<svg style="left:706.5px;top:118.5px" width="5" height="3" viewBox="0 0 5 3"><path d="M0 3H5L2.5 0Z" fill="#000"/></svg>
<div class="a" style="left:704px;top:307px;width:10px;height:1px;background:#a8a8a8"></div>
<div class="a" style="left:704px;top:308px;width:10px;height:10px;background:#f8f8f8;border-right:1px solid #909090;border-bottom:1px solid #909090"></div>
<svg style="left:706.5px;top:312px" width="5" height="3" viewBox="0 0 5 3"><path d="M0 0H5L2.5 3Z" fill="#000"/></svg>
<div class="a" style="left:199px;top:318px;width:505px;height:10px;background:#f8f8f8"></div>
<svg style="left:200px;top:320px" width="6" height="7" viewBox="0 0 6 7"><path d="M0 1.5H6M0 4.5H6" stroke="#808080" stroke-width="1"/><path d="M0.5 1V5" stroke="#808080" stroke-width="1"/></svg>
<div class="a" style="left:207px;top:318px;width:11px;height:10px;background:#e8e8e8;border-left:1px solid #505050;border-top:1px solid #909090"></div>
<svg style="left:209px;top:320px" width="7" height="7" viewBox="0 0 7 7"><path d="M0 1.5H7M0 3.5H7M0 5.5H7" stroke="#404040" stroke-width="1"/><path d="M0.5 1V6" stroke="#404040" stroke-width="1"/></svg>
<svg style="left:221.5px;top:321px" width="3" height="5" viewBox="0 0 3 5"><path d="M3 0V5L0 2.5Z" fill="#000"/></svg>
<div class="a" style="left:228px;top:318px;width:48px;height:10px;background:#f0f0f0;border-top:1px solid #e0e0e0;border-left:1px solid #909090;border-right:1px solid #707070;border-bottom:1px solid #707070"></div>
<div class="a" style="left:695px;top:318px;width:10px;height:10px;background:#f8f8f8;border-right:1px solid #909090;border-bottom:1px solid #909090"></div>
<svg style="left:699px;top:320.5px" width="3" height="5" viewBox="0 0 3 5"><path d="M0 0V5L3 2.5Z" fill="#000"/></svg>
<div class="a" style="left:705px;top:318px;width:10px;height:10px;background:#f6f6f6"></div>
<svg style="left:706px;top:319px" width="9" height="9" viewBox="0 0 9 9"><path d="M8.5 2L2 8.5M8.5 5L5 8.5" stroke="#b0b0b0" stroke-width="0.8"/></svg>
<div class="code" style="left:218px;top:112.9px"><span class="kw">Sub</span> Macro1()
<span class="ap">'</span>
<span class="ap">'</span><span class="cm"> Macro1 Macro</span>
<span class="ap">'</span>

<span class="ap">'</span>
    Range("I15").Select
    ActiveCell.FormulaR1C1 = "hello"
    Selection.Font.Bold = <span class="kw">True</span>
<span class="kw">End Sub</span></div>
</body></html>
